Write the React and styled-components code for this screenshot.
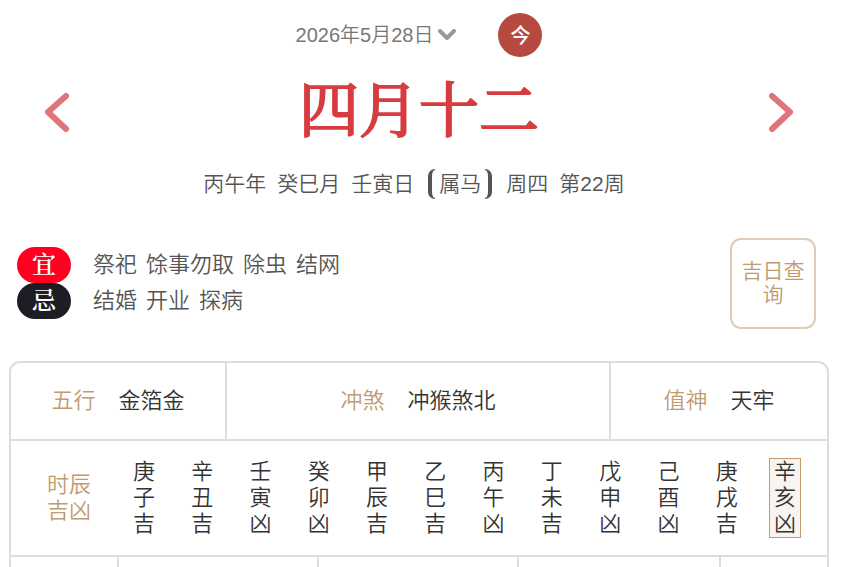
import React, {useState} from 'react';
import styled, {createGlobalStyle} from 'styled-components';

const facts = [
  {label: '五行', value: '金箔金'},
  {label: '冲煞', value: '冲猴煞北'},
  {label: '值神', value: '天牢'},
];

const hours = [
  '庚子吉', '辛丑吉', '壬寅凶', '癸卯凶', '甲辰吉', '乙巳吉',
  '丙午凶', '丁未吉', '戊申凶', '己酉凶', '庚戌吉', '辛亥凶',
];

const good = ['祭祀', '馀事勿取', '除虫', '结网'];
const bad = ['结婚', '开业', '探病'];

const Arrow = ({points}) => (
  <svg width="26" height="40" viewBox="0 0 26 40" fill="none" aria-hidden="true">
    <polyline points={points} stroke="#df7479" strokeWidth="6" strokeLinecap="round" strokeLinejoin="round"/>
  </svg>
);

const App = () => {
  const [hour, setHour] = useState('辛亥凶');
  return (
    <Page>
      <GlobalStyle/>
      <Header>
        <DateRow>
          <DateButton type="button">
            2026年5月28日
            <svg width="18" height="12" viewBox="0 0 18 12" fill="none" aria-hidden="true">
              <polyline points="2,2 9,9 16,2" stroke="#999" strokeWidth="4" strokeLinecap="round" strokeLinejoin="round"/>
            </svg>
          </DateButton>
          <TodayButton type="button">今</TodayButton>
        </DateRow>
        <TitleRow>
          <ArrowButton type="button" aria-label="前一天"><Arrow points="22,4 4,20 22,37"/></ArrowButton>
          <Title>四月十二</Title>
          <ArrowButton type="button" aria-label="后一天"><Arrow points="4,4 22,20 4,37"/></ArrowButton>
        </TitleRow>
        <SubTitle>
          <span>丙午年</span>
          <span>癸巳月</span>
          <span>壬寅日</span>
          <Zodiac>
            <Bracket/>
            属马
            <Bracket $right/>
          </Zodiac>
          <span>周四</span>
          <span>第22周</span>
        </SubTitle>
      </Header>

      <Advice>
        <AdviceList>
          <AdviceRow>
            <Badge $color="#ff0020">宜</Badge>
            <Words>{good.map(word => <span key={word}>{word}</span>)}</Words>
          </AdviceRow>
          <AdviceRow>
            <Badge $color="#1d1e25">忌</Badge>
            <Words>{bad.map(word => <span key={word}>{word}</span>)}</Words>
          </AdviceRow>
        </AdviceList>
        <QueryButton type="button">吉日查询</QueryButton>
      </Advice>

      <Card>
        <Facts>
          {facts.map(({label, value}) => (
            <Fact key={label}>
              <Label>{label}</Label>
              <Value>{value}</Value>
            </Fact>
          ))}
        </Facts>
        <HoursRow>
          <HoursTitle>时辰吉凶</HoursTitle>
          <Hours>
            {hours.map(item => (
              <Hour key={item} type="button" $active={item === hour} onClick={() => setHour(item)}>
                {item}
              </Hour>
            ))}
          </Hours>
        </HoursRow>
        <Details>
          <div/>
          <div/>
          <div/>
          <div/>
          <div/>
        </Details>
      </Card>
    </Page>
  );
}

export default App;

const GlobalStyle = createGlobalStyle`
  * {
    box-sizing: border-box;
  }
  html {
    scrollbar-width: none;
  }
  body {
    margin: 0;
    background: #fff;
    font-family: "Liberation Sans", "Noto Sans CJK SC DemiLight", "Noto Sans CJK SC", sans-serif;
    font-weight: 350;
    color: #333;
  }
  button {
    padding: 0;
    border: none;
    background: none;
    font: inherit;
    color: inherit;
    cursor: pointer;
  }
`;

const Page = styled.div`
  padding: 13px 14px 0 9px;
`;

const Header = styled.header`
  display: flex;
  flex-direction: column;
`;

const DateRow = styled.div`
  display: flex;
  justify-content: center;
  align-items: center;
  gap: 42px;
  height: 44px;
`;

const DateButton = styled.button`
  display: flex;
  align-items: center;
  gap: 5px;
  font-size: 20px;
  line-height: 24px;
  color: #777;
`;

const TodayButton = styled.button`
  width: 44px;
  height: 44px;
  border-radius: 50%;
  background: #b64a40;
  color: #fff;
  font-family: "Noto Sans CJK SC", sans-serif;
  font-size: 20px;
  font-weight: 500;
  line-height: 44px;
`;

const TitleRow = styled.div`
  display: flex;
  justify-content: space-between;
  align-items: center;
  height: 110px;
  padding: 0 35px;
`;

const ArrowButton = styled.button`
  display: flex;
`;

const Title = styled.h1`
  margin: 0;
  font-family: "Liberation Serif", "Noto Serif CJK SC", "Noto Sans CJK SC", serif;
  font-size: 60px;
  font-weight: 400;
  line-height: 80px;
  color: #d63c40;
  -webkit-text-stroke: 2px #d63c40;
`;

const SubTitle = styled.div`
  display: flex;
  justify-content: center;
  align-items: center;
  gap: 11px;
  height: 34px;
  padding-right: 10px;
  font-size: 21px;
  line-height: 24px;
  color: #555;
`;

const Zodiac = styled.span`
  display: flex;
  align-items: center;
  gap: 4px;
  margin: 0 3px;
`;

const Bracket = styled.i`
  width: 7px;
  height: 30px;
  border: solid #555;
  border-width: ${props => props.$right ? '1px 4px 1px 0' : '1px 0 1px 4px'};
  border-radius: ${props => props.$right ? '0 7px 7px 0' : '7px 0 0 7px'};
`;

const Advice = styled.section`
  display: flex;
  justify-content: space-between;
  align-items: center;
  margin-top: 37px;
  padding: 0 13px 0 8px;
`;

const AdviceList = styled.div`
  display: flex;
  flex-direction: column;
  padding-bottom: 1px;
`;

const AdviceRow = styled.div`
  display: flex;
  align-items: center;
  gap: 22px;
  height: 36px;
`;

const Badge = styled.span`
  width: 54px;
  height: 36px;
  border-radius: 18px;
  background: ${props => props.$color};
  color: #fff;
  font-family: "Liberation Serif", "Noto Serif CJK SC", "Noto Sans CJK SC", serif;
  font-size: 24px;
  font-weight: 600;
  line-height: 36px;
  text-align: center;
`;

const Words = styled.div`
  display: flex;
  gap: 9px;
  font-size: 22px;
  line-height: 36px;
  color: #555;
`;

const QueryButton = styled.button`
  width: 86px;
  height: 91px;
  padding: 0 9px 2px;
  border: 2px solid #dfcbb6;
  border-radius: 11px;
  color: #c19b70;
  font-size: 21px;
  line-height: 24px;
`;

const Card = styled.section`
  margin-top: 32px;
  border: 2px solid #deded8;
  border-radius: 11px;
  font-size: 22px;
  line-height: 26px;
`;

const Facts = styled.dl`
  display: grid;
  grid-template-columns: 214fr 384fr 218fr;
  margin: 0;
`;

const Fact = styled.div`
  display: flex;
  justify-content: center;
  align-items: center;
  gap: 23px;
  height: 76px;
  & + & {
    border-left: 2px solid #deded8;
  }
`;

const Label = styled.dt`
  color: #c19b70;
`;

const Value = styled.dd`
  margin: 0;
`;

const HoursRow = styled.div`
  display: flex;
  align-items: center;
  height: 118px;
  padding: 0 26px 0 36px;
  border: solid #deded8;
  border-width: 2px 0;
`;

const HoursTitle = styled.div`
  width: 44px;
  color: #c19b70;
`;

const Hours = styled.div`
  flex: 1;
  display: flex;
  justify-content: space-between;
  margin-left: 37px;
`;

const Hour = styled.button`
  width: 32px;
  padding: 0 4px;
  border: 1px solid ${props => props.$active ? '#c19b70' : 'transparent'};
  background: ${props => props.$active ? '#f9f4f0' : 'none'};
`;

const Details = styled.div`
  display: grid;
  grid-template-columns: 106fr 200fr 200fr 202fr 108fr;
  & > div {
    height: 80px;
  }
  & > div + div {
    border-left: 2px solid #deded8;
  }
`;
